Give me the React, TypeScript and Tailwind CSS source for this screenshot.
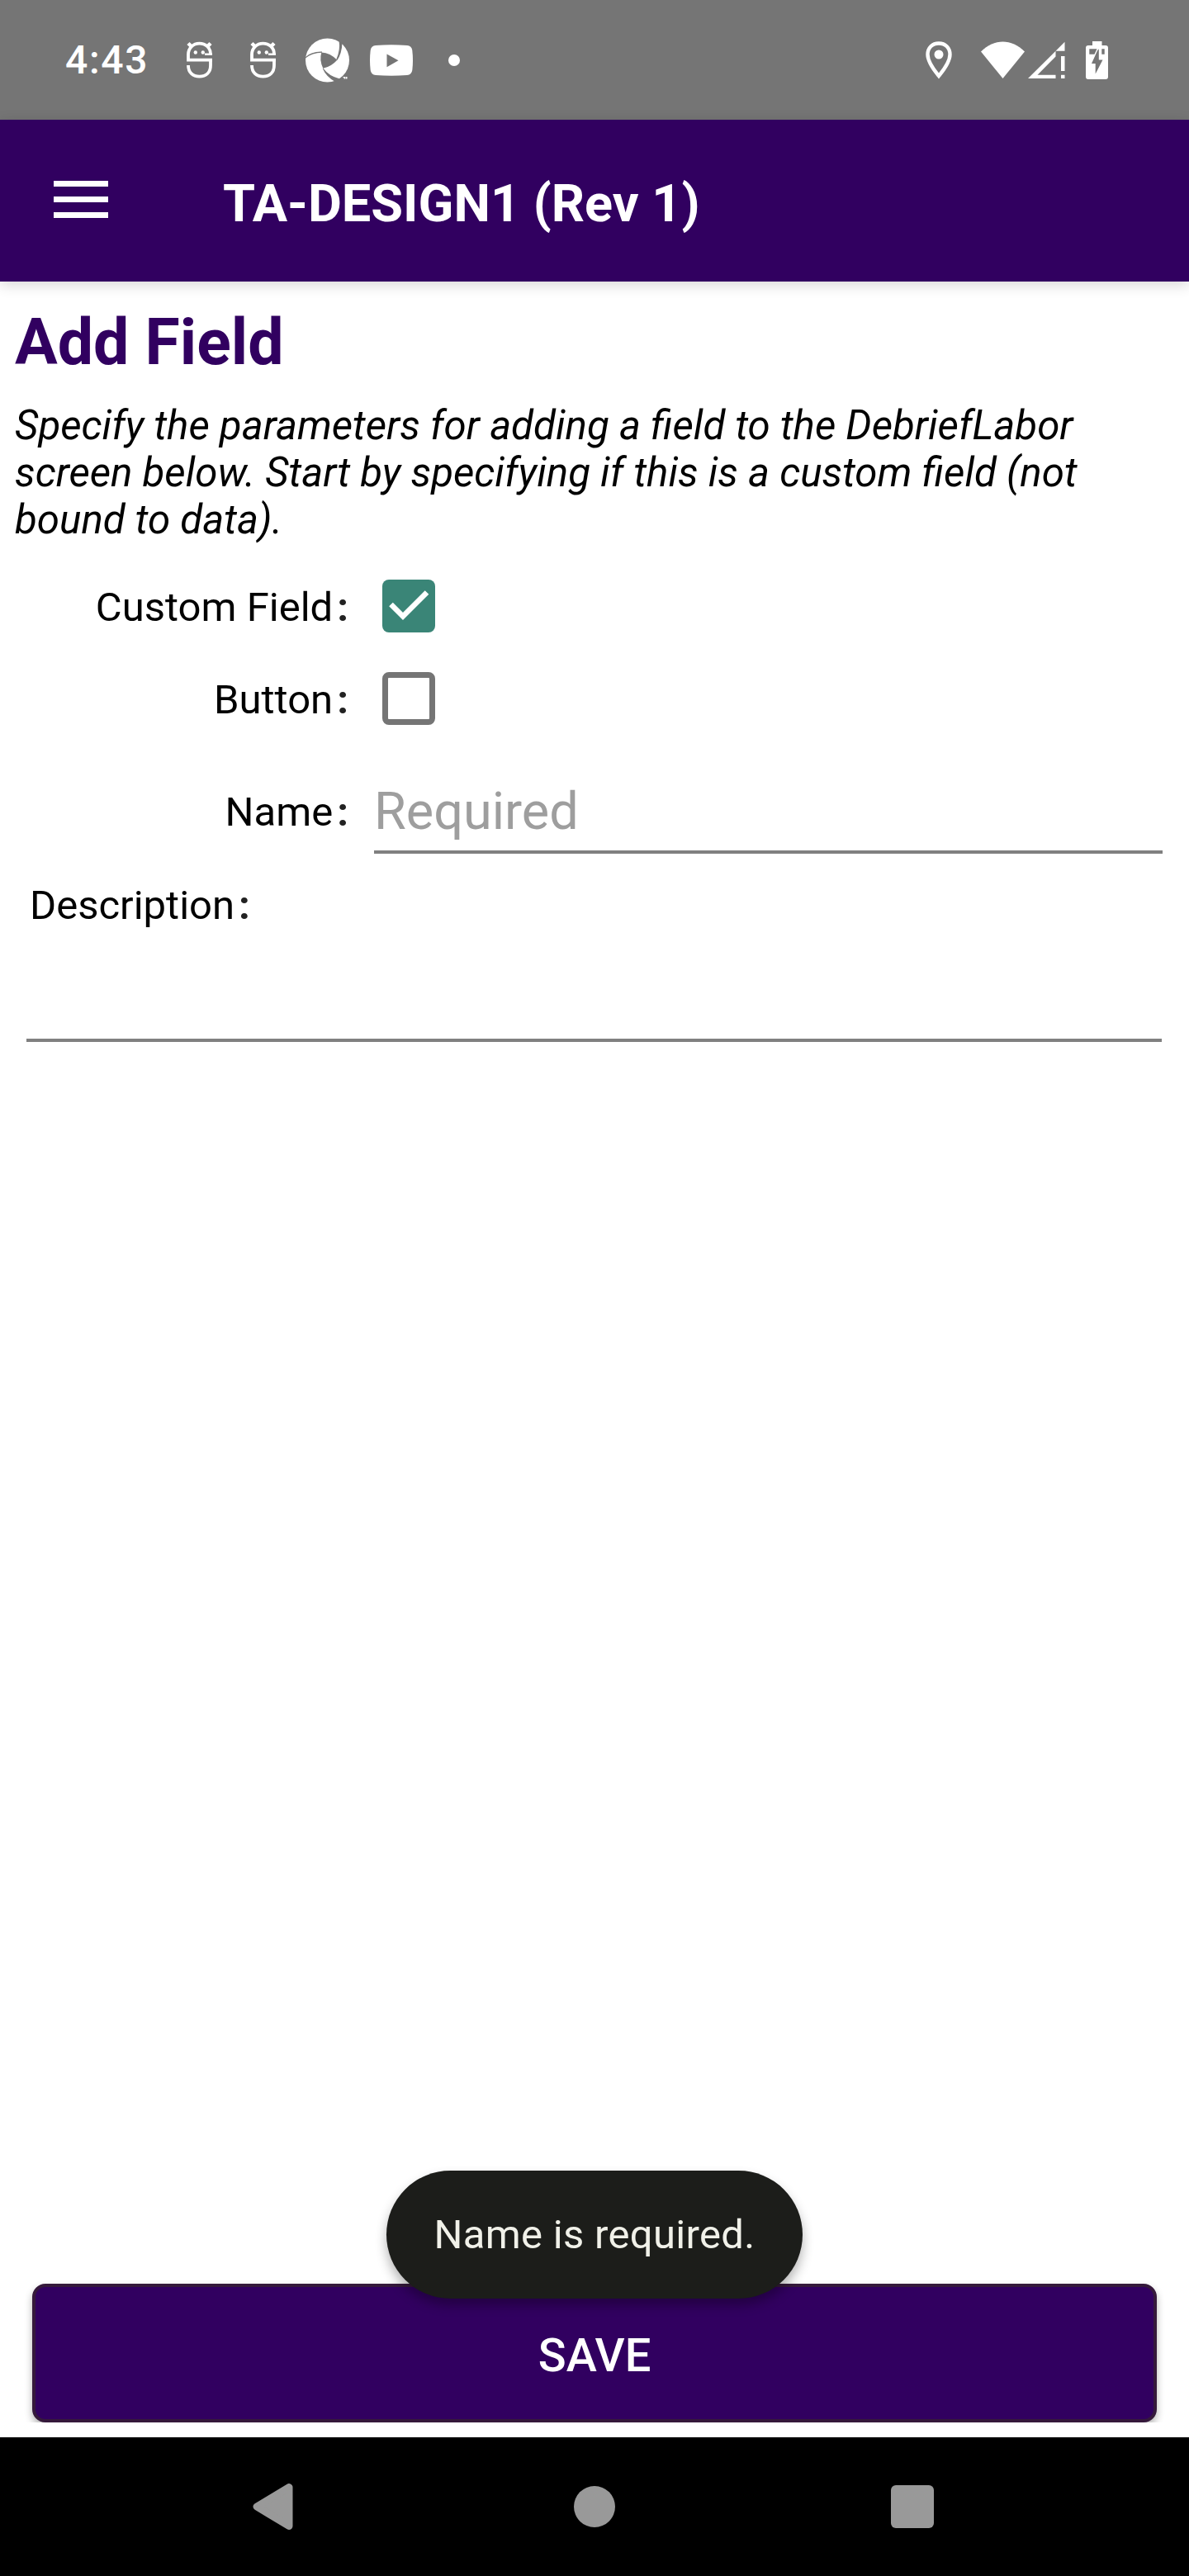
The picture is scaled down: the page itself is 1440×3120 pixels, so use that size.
import React from "react";

function FaceIcon({ className }: { className: string }) {
  return (
    <svg className={className} viewBox="0 0 32 46" fill="none" stroke="#fff" strokeWidth="3.800">
      <path d="M31 22.700H2V16C2 8 8 2.600 15.500 2.600S29 8 29 15.500" />
      <path d="M22 15.700H31" strokeWidth="2.400" />
      <path d="M29 22.700V29C29 38 23.500 42.600 15.500 42.600S2 38 2 29" />
      <path d="M2 2.500L6 6.500M29 2.500L25 6.500" strokeWidth="4.500" />
      <circle cx="10.800" cy="13.500" r="2.200" fill="#fff" stroke="none" />
      <circle cx="19.800" cy="13.500" r="2.200" fill="#fff" stroke="none" />
    </svg>
  );
}

function ApertureIcon() {
  return (
    <svg className="ml-[35px] h-[54px] w-[54px] shrink-0" viewBox="0 0 54 54">
      <circle cx="26.500" cy="27" r="26.500" fill="#fff" />
      <path d="M19.300 17.500Q30 18 38.300 26.800Q31 35 21.300 36.800Q16.500 27 19.300 17.500Z" fill="#757575" />
      <path d="M-.5 23.500Q7 16 20 16.500L20 17.800Q8 18 .2 24.200Z" fill="#757575" />
      <path d="M40.500 3L44.500 5.500Q44 19 38.300 27L37.300 26Q42.500 14 40.500 3Z" fill="#757575" />
      <path d="M21.300 36.500Q28 46 41.500 49.500L36 53Q25 47 20.800 37Z" fill="#757575" />
      <path d="M45.500 47H48V49.500H46.500V48H45.500ZM48.500 47H50.500V49.500H48.500Z" fill="#fff" />
    </svg>
  );
}

function StatusBar() {
  return (
    <div className="flex h-[145px] shrink-0 items-center bg-[#757575] pl-[79px] pr-[97px]">
      <span className="w-[147px] text-[48px] font-medium leading-none tracking-[1.700px] text-white">4:43</span>
      <FaceIcon className="h-[46px] w-[32px] shrink-0" />
      <FaceIcon className="ml-[45px] h-[46px] w-[32px] shrink-0" />
      <ApertureIcon />
      <svg className="ml-[23px] h-[38px] w-[54px] shrink-0" viewBox="0 0 54 38">
        <path d="M8 1Q27-.6 46 1Q51.500 1.500 52.300 7Q53.700 19 52.300 31Q51.500 36.500 46 37Q27 38.600 8 37Q2.500 36.500 1.700 31Q.3 19 1.700 7Q2.500 1.500 8 1Z" fill="#fff" />
        <path d="M21.500 11.500L35.500 19.300L21.500 27.200Z" fill="#757575" />
      </svg>
      <span className="ml-[42px] size-[14px] rounded-full bg-white" />
      <svg className="ml-auto h-[46px] w-[32px] shrink-0" viewBox="0 0 32 46">
        <path d="M16 2.500C8 2.500 2.500 8 2.500 16C2.500 26 12 37 16 42C20 37 29.500 26 29.500 16C29.500 8 24 2.500 16 2.500Z" fill="none" stroke="#fff" strokeWidth="4.400" />
        <circle cx="16" cy="16" r="5.500" fill="#fff" />
      </svg>
      <svg className="ml-[35px] h-[46px] w-[53px] shrink-0" viewBox="0 0 53 46">
        <path d="M0 12.500C16-3.500 37-3.500 53 12.500L26.500 45Z" fill="#fff" />
      </svg>
      <svg className="ml-[4px] h-[46px] w-[46px] shrink-0" viewBox="0 0 46 46" fill="#fff">
        <path d="M0 45L33.500 11.800V18.500L11.500 40.700H33.500V45Z" />
        <path d="M33.500 11.800L44.500 .8V11.800Z" />
        <path d="M40 18H44.500V36H40ZM40 40.700H44.500V45H40Z" />
      </svg>
      <svg className="ml-[24px] h-[46px] w-[28px] shrink-0" viewBox="0 0 28 46">
        <path d="M8 0H19.500V5H24Q27 5 27 8V43Q27 46 24 46H3Q0 46 0 43V8Q0 5 3 5H8Z" fill="#fff" />
        <path d="M4.300 9.300H13.500L10.500 15.700H4.300ZM19.300 9.300H22.700V15.700H19.300Z" fill="#757575" />
        <path d="M14.200 11L15.800 9.300V22.500H20.500L11.700 39.500V27H7Z" fill="#757575" />
      </svg>
    </div>
  );
}

function Label({ children, className }: { children: string; className: string }) {
  return (
    <div className={"flex items-baseline text-[49px] leading-[58px] text-black " + className}>
      <span>{children}</span>
      <span className="ml-[5px] font-bold text-[#222]">:</span>
    </div>
  );
}

export default function App() {
  return (
    <div className="relative flex h-[3120px] w-[1440px] flex-col overflow-hidden bg-white font-['Roboto',sans-serif]">
      <StatusBar />
      <header className="flex h-[196px] shrink-0 items-center bg-[#310060] pl-[65px] shadow-[0_4px_16px_rgba(0,0,0,0.16)]">
        <div className="mb-[3px] flex w-[66px] flex-col gap-[12px]">
          <span className="h-[7px] bg-white" />
          <span className="h-[7px] bg-white" />
          <span className="h-[7px] bg-white" />
        </div>
        <h1 className="ml-[139px] mt-[7px] text-[63px] font-bold leading-[74px] text-white">TA-DESIGN1 (Rev 1)</h1>
      </header>

      <main className="flex flex-1 flex-col">
        <h2 className="ml-[18px] mt-[29px] text-[77px] font-bold leading-[90px] text-[#310060]">Add Field</h2>
        <p className="ml-[18px] mt-[27px] text-[49.250px] italic leading-[57px] text-black">
          Specify the parameters for adding a field to the DebriefLabor
          <br />
          screen below. Start by specifying if this is a custom field (not
          <br />
          bound to data).
        </p>
        <div className="mt-[22px] flex h-[112px] items-center">
          <Label className="w-[422px] justify-end">Custom Field</Label>
          <div className="mb-[4px] ml-[41px] flex size-[64px] items-center justify-center rounded-[8px] bg-[#3a8577]">
            <svg className="size-[64px]" viewBox="0 0 64 64" fill="none" stroke="#fff" strokeWidth="6.500">
              <path d="M10.500 30L25 44.500L54 15.500" />
            </svg>
          </div>
        </div>
        <div className="flex h-[112px] items-center">
          <Label className="w-[422px] justify-end">Button</Label>
          <div className="mb-[4px] ml-[41px] size-[64px] rounded-[8px] border-[7px] border-[#757575]" />
        </div>
        <div className="flex h-[130px] items-end">
          <Label className="mb-[21px] w-[422px] justify-end">Name</Label>
          <div className="ml-[31px] w-[955px] border-b-[4px] border-[#808080] text-[63px] leading-[74px] text-[#9e9e9e]">
            <div className="pb-[10px]">Required</div>
          </div>
        </div>
        <Label className="ml-[36px] mt-[34px]">Description</Label>
        <div className="ml-[32px] mt-[132px] h-[4px] w-[1375px] bg-[#808080]" />
        <div className="mt-auto h-[168px] px-[39px] [clip-path:inset(-20px_0_0_0)]">
          <button className="flex h-[168px] w-full items-center justify-center rounded-[16px] border-[4px] border-[#35193b] bg-[#310060] pt-[5px] text-[56px] font-medium leading-none text-white shadow-[0_5px_10px_rgba(0,0,0,0.3)]">
            SAVE
          </button>
        </div>
        <div className="h-[18px]" />
      </main>

      <div className="absolute left-[468px] top-[2629px] flex h-[155px] w-[504px] items-center justify-center rounded-full bg-[#1c1d1a] text-[49px] leading-none tracking-[0.300px] text-[#f1f1e9] shadow-[0_8px_14px_rgba(0,0,0,0.3)]">
        Name is required.
      </div>

      <nav className="flex h-[168px] shrink-0 items-center bg-black pl-[306px]">
        <svg className="h-[56px] w-[49px]" viewBox="0 0 49 56">
          <path d="M44 4.500V51.500L5 28Z" fill="#999" stroke="#999" strokeWidth="9" strokeLinejoin="round" />
        </svg>
        <span className="ml-[340px] size-[50px] rounded-full bg-[#999]" />
        <span className="ml-[334px] size-[52px] rounded-[6px] bg-[#999]" />
      </nav>
    </div>
  );
}
